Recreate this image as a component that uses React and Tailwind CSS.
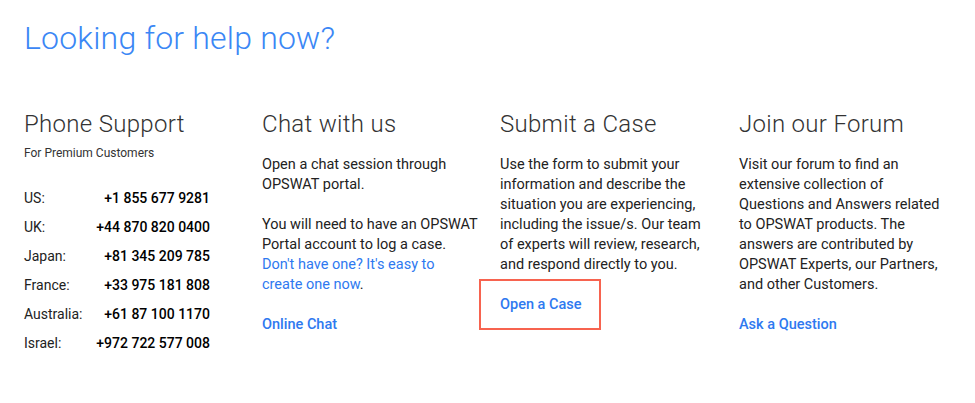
const phones = [
  ['US:', '+1 855 677 9281'],
  ['UK:', '+44 870 820 0400'],
  ['Japan:', '+81 345 209 785'],
  ['France:', '+33 975 181 808'],
  ['Australia:', '+61 87 100 1170'],
  ['Israel:', '+972 722 577 008'],
]

function Heading({ children }) {
  return <h3 className="text-[24px] font-light leading-[30px] tracking-[0.3px] text-[#333]">{children}</h3>
}

function Link({ children }) {
  return <a href="#" className="font-medium text-[#2e79f0]">{children}</a>
}

export default function App() {
  return (
    <div className="min-h-[403px] w-[975px] bg-white px-6 pt-[18px] font-['Roboto',sans-serif] text-[#222]">
      <h1 className="text-[32px] font-light leading-[40px] tracking-[0.2px] text-[#3b87f5]">Looking for help now?</h1>

      <div className="mt-[51px] grid grid-cols-[238px_238px_239px_220px]">
        <div>
          <Heading>Phone Support</Heading>
          <p className="mt-[7px] text-[12px] leading-[14px] text-[#333]">For Premium Customers</p>
          <div className="mt-[28px] flex w-[186px] flex-col gap-[9px] text-[14px] leading-[20px]">
            {phones.map(([country, number]) => (
              <div key={country} className="flex justify-between">
                <span>{country}</span>
                <span className="font-medium text-black">{number}</span>
              </div>
            ))}
          </div>
        </div>

        <div>
          <Heading>Chat with us</Heading>
          <div className="mt-[16px] w-[232px] text-[14.5px] leading-[20px]">
            <p>Open a chat session through<br />OPSWAT portal.</p>
            <p className="mt-[20px]">
              You will need to have an OPSWAT<br />Portal account to log a case.<br />
              <a href="#" className="text-[#2e79f0]">Don't have one? It's easy to<br />create one now</a>.
            </p>
            <p className="mt-[20px]"><Link>Online Chat</Link></p>
          </div>
        </div>

        <div>
          <Heading>Submit a Case</Heading>
          <div className="mt-[16px] w-[212px] text-[14.5px] leading-[20px]">
            <p>Use the form to submit your information and describe the situation you are experiencing, including the issue/s. Our team of experts will review, research, and respond directly to you.</p>
          </div>
          <div className="-ml-[21px] mt-[4px] flex h-[51px] w-[122px] items-center border-2 border-[#f7634f] pl-[19px] text-[14.5px]">
            <Link>Open a Case</Link>
          </div>
        </div>

        <div>
          <Heading>Join our Forum</Heading>
          <div className="mt-[16px] w-[210px] text-[14.5px] leading-[20px]">
            <p>Visit our forum to find an extensive collection of Questions and Answers related to OPSWAT products. The answers are contributed by OPSWAT Experts, our Partners, and other Customers.</p>
            <p className="mt-[20px]"><Link>Ask a Question</Link></p>
          </div>
        </div>
      </div>
    </div>
  )
}
